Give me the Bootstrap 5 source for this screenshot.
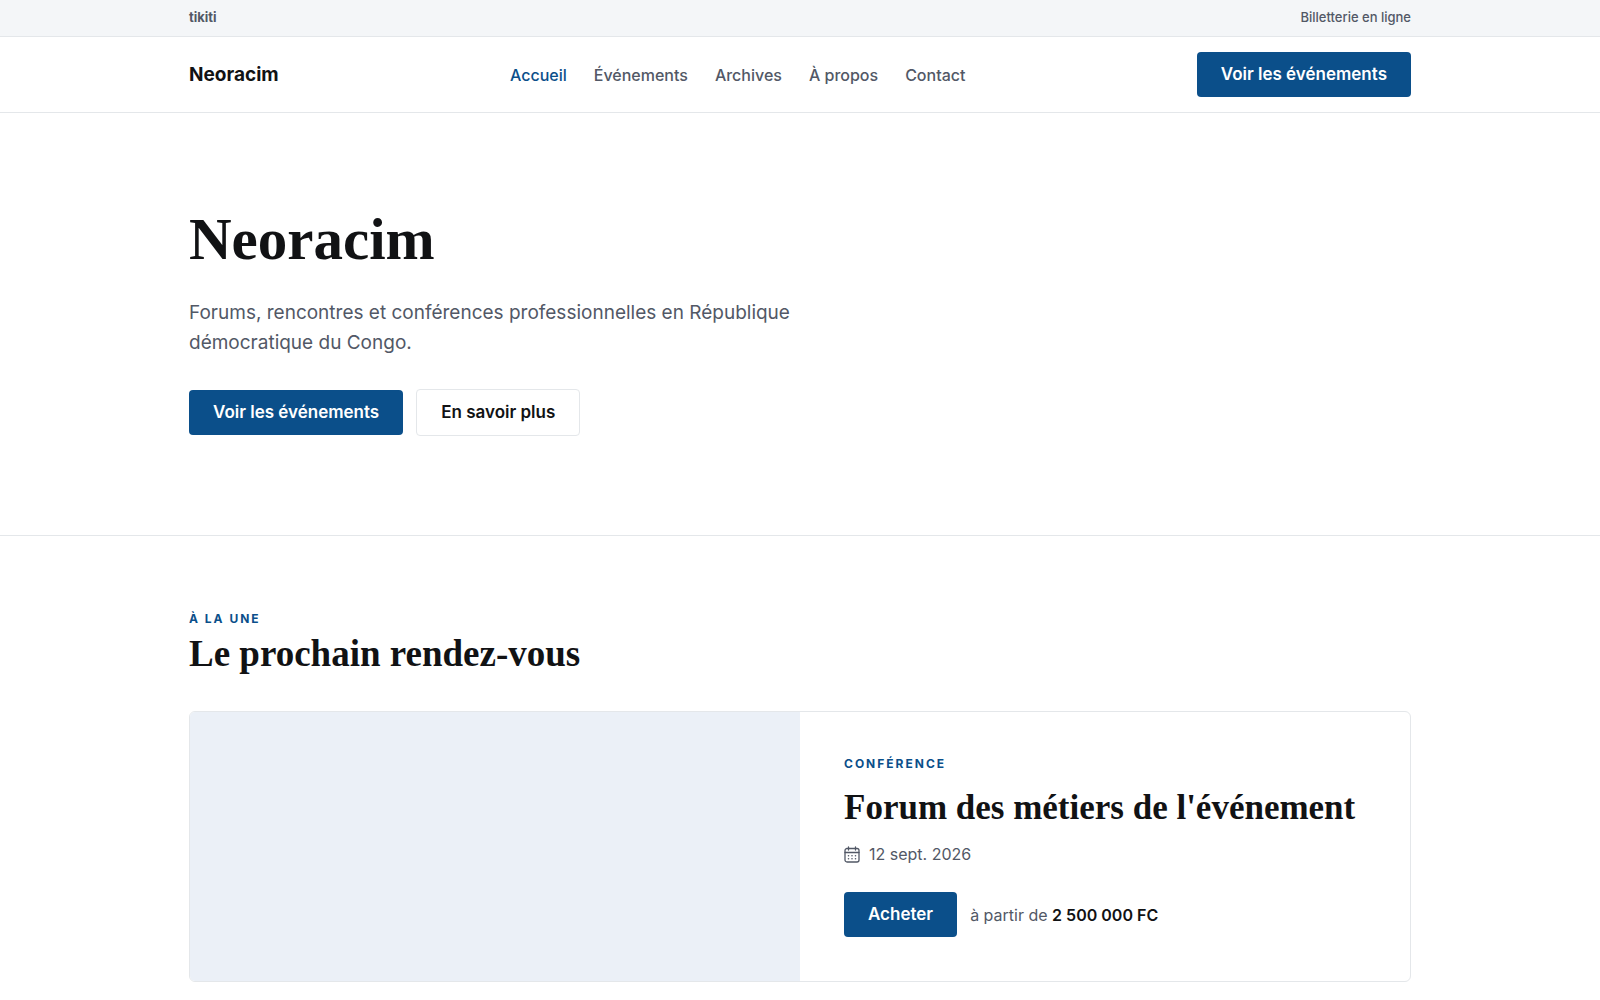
<!DOCTYPE html>
<html lang="fr">
<head>
<meta charset="utf-8">
<meta name="viewport" content="width=device-width, initial-scale=1">
<title>Neoracim</title>
<link href="https://cdn.jsdelivr.net/npm/bootstrap@5.3.0/dist/css/bootstrap.min.css" rel="stylesheet">
<style>
:root { --brand: #0b4f8a; --ink: #111214; --soft: #525866; --line: #e4e7ea; }
body { font-family: Inter, "Liberation Sans", sans-serif; font-size: 17px; line-height: 24px; color: var(--ink); background: #fff; }
.page-wrap { max-width: 1270px; padding-left: 24px; padding-right: 24px; }
.topbar { background: #f4f6f8; border-color: var(--line) !important; line-height: 20px; color: var(--soft); padding: 7px 0 9px; }
.topbar a { color: inherit; }
.topbar-note { font-weight: 500; font-size: 13px; }
.site-nav { border-color: var(--line) !important; padding: 15px 0; }
.site-nav .navbar-brand { font-size: 19px; font-weight: 700; color: var(--ink); padding: 0; margin: 0; }
.site-nav .navbar-nav { gap: 27px; }
.site-nav .navbar-nav .nav-link { padding: 0; font-size: 16px; line-height: 24px; font-weight: 500; color: var(--soft); }
.site-nav .navbar-nav .nav-link.active { color: var(--brand); }
.btn { font-size: 17px; font-weight: 600; line-height: 25px; padding: 10px 24px; border: 0; border-radius: 4px; }
.btn-brand { --bs-btn-color: #fff; --bs-btn-bg: #0b4f8a; --bs-btn-hover-color: #fff; --bs-btn-hover-bg: #083f6f; }
.btn-plain { --bs-btn-color: #111214; --bs-btn-hover-bg: #f4f6f8; border: 1px solid var(--line); }
.action-row { gap: 13px; }
.display-title, .section-title, .event-title { font-family: "Liberation Serif", "Times New Roman", serif; font-weight: 700; color: var(--ink); margin: 0; }
.hero { border-color: var(--line) !important; padding: 90px 0 99px; }
.display-title { font-size: 59px; line-height: 72px; }
.hero-text { font-size: 19px; line-height: 30px; color: var(--soft); max-width: 620px; margin: 23px 0 31px; }
.featured { padding: 75px 0 16px; }
.eyebrow { font-size: 12px; line-height: 16px; font-weight: 700; letter-spacing: 2px; color: var(--brand); text-transform: uppercase; margin: 0; }
.section-title { font-size: 37px; line-height: 44px; margin: 5px 0 35px; }
.event-card { border: 1px solid var(--line); border-radius: 6px; overflow: hidden; }
.event-cover { background: #ebf0f7; min-height: 200px; }
.event-body { padding: 44px; }
.event-title { font-size: 35px; line-height: 44px; margin: 14px 0 12px; }
.event-date { color: var(--soft); gap: 9px; margin-bottom: 26px; font-size: 16px; }
.event-price { color: var(--soft); font-size: 16px; }
.event-price strong { color: var(--ink); font-weight: 600; }
</style>
</head>
<body>
<div class="topbar border-bottom">
  <div class="container-fluid page-wrap d-flex justify-content-between">
    <a class="text-decoration-none fw-bold topbar-note" href="#">tikiti</a>
    <span class="topbar-note">Billetterie en ligne</span>
  </div>
</div>
<nav class="navbar navbar-expand site-nav border-bottom" aria-label="Navigation principale">
  <div class="container-fluid page-wrap justify-content-between">
    <a class="navbar-brand" href="#">Neoracim</a>
    <ul class="navbar-nav">
      <li class="nav-item"><a class="nav-link active" aria-current="page" href="#">Accueil</a></li>
      <li class="nav-item"><a class="nav-link" href="#">Événements</a></li>
      <li class="nav-item"><a class="nav-link" href="#">Archives</a></li>
      <li class="nav-item"><a class="nav-link" href="#">À propos</a></li>
      <li class="nav-item"><a class="nav-link" href="#">Contact</a></li>
    </ul>
    <button type="button" class="btn btn-brand">Voir les événements</button>
  </div>
</nav>
<main>
  <section class="hero border-bottom">
    <div class="container-fluid page-wrap">
      <h1 class="display-title">Neoracim</h1>
      <p class="hero-text">Forums, rencontres et conférences professionnelles en République démocratique du Congo.</p>
      <div class="d-flex flex-wrap align-items-center action-row">
        <button type="button" class="btn btn-brand">Voir les événements</button>
        <button type="button" class="btn btn-plain">En savoir plus</button>
      </div>
    </div>
  </section>
  <section class="featured">
    <div class="container-fluid page-wrap">
      <p class="eyebrow">À la une</p>
      <h2 class="section-title">Le prochain rendez-vous</h2>
      <article class="event-card row g-0">
        <div class="col-md-6 event-cover"></div>
        <div class="col-md-6 event-body">
          <p class="eyebrow">Conférence</p>
          <h3 class="event-title">Forum des métiers de l'événement</h3>
          <div class="event-date d-flex align-items-center">
            <svg width="16" height="17" viewBox="0 0 16 17" fill="none" stroke="currentColor" stroke-width="1.300" stroke-linecap="round" stroke-linejoin="round" aria-hidden="true"><path d="M4.500 1v3M11.500 1v3M1 6.500h14"/><rect x="1" y="2.500" width="14" height="13.500" rx="2"/><path stroke-width="1.600" d="M4.500 9.800h.01M8 9.800h.01M11.500 9.800h.01M4.500 12.800h.01M8 12.800h.01M11.500 12.800h.01"/></svg>
            <span>12 sept. 2026</span>
          </div>
          <div class="d-flex align-items-center flex-wrap action-row">
            <button type="button" class="btn btn-brand">Acheter</button>
            <span class="event-price">à partir de <strong>2&nbsp;500&nbsp;000&nbsp;FC</strong></span>
          </div>
        </div>
      </article>
    </div>
  </section>
</main>
<script src="https://cdn.jsdelivr.net/npm/bootstrap@5.3.0/dist/js/bootstrap.bundle.min.js"></script>
</body>
</html>
